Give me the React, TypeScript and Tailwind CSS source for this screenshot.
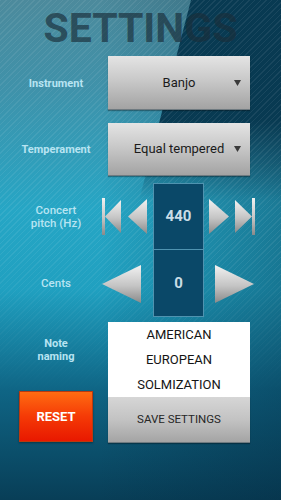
import React from "react";

const Silver: React.FC<{ id: string }> = ({ id }) => (
  <defs>
    <linearGradient id={id} x1="0" y1="0" x2="0" y2="1">
      <stop offset="0%" stopColor="#f2f2f2" />
      <stop offset="55%" stopColor="#c4c4c4" />
      <stop offset="100%" stopColor="#8a8a8a" />
    </linearGradient>
  </defs>
);

const SkipBack = () => (
  <svg width="19" height="37" viewBox="0 0 19 37">
    <Silver id="sb" />
    <rect x="0" y="0" width="3" height="37" fill="url(#sb)" />
    <polygon points="3,18.5 19,2 19,35" fill="url(#sb)" />
  </svg>
);

const Prev = () => (
  <svg width="19" height="37" viewBox="0 0 19 37">
    <Silver id="pv" />
    <polygon points="0,18.5 19,1 19,36" fill="url(#pv)" />
  </svg>
);

const Next = () => (
  <svg width="20" height="37" viewBox="0 0 20 37">
    <Silver id="nx" />
    <polygon points="0,1 20,18.5 0,36" fill="url(#nx)" />
  </svg>
);

const SkipFwd = () => (
  <svg width="20" height="37" viewBox="0 0 20 37">
    <Silver id="sf" />
    <polygon points="0,2 17,18.5 0,35" fill="url(#sf)" />
    <rect x="17" y="0" width="3" height="37" fill="url(#sf)" />
  </svg>
);

const BigTri: React.FC<{ dir: "left" | "right"; id: string }> = ({ dir, id }) => (
  <svg width="39" height="38" viewBox="0 0 39 38">
    <Silver id={id} />
    <polygon
      points={dir === "left" ? "0,19 39,0 39,38" : "0,0 39,19 0,38"}
      fill={`url(#${id})`}
    />
  </svg>
);

const Dropdown: React.FC<{ value: string }> = ({ value }) => (
  <div className="w-[142px] h-full grid grid-cols-[1fr_auto_1fr] items-center bg-[linear-gradient(to_bottom,#e4e4e4,#c9c9c9_45%,#a3a3a3)] border-b border-[#6f7a80] shadow-[0_1px_1px_rgba(0,0,0,0.3)]">
    <span />
    <span className="text-[13px] text-[#1b1b1b] whitespace-nowrap">{value}</span>
    <svg className="justify-self-end mr-[9px]" width="7" height="6" viewBox="0 0 7 6">
      <polygon points="0,0 7,0 3.5,6" fill="#3a3a3a" />
    </svg>
  </div>
);

const Label: React.FC<{ children: React.ReactNode; bold?: boolean }> = ({ children, bold }) => (
  <div
    className={`w-[108px] pl-[4px] text-center leading-[13px] text-[#b8e4f2] ${
      bold ? "font-bold text-[11px]" : "font-medium text-[11.5px]"
    }`}
  >
    {children}
  </div>
);

export default function App() {
  return (
    <div className="relative w-[281px] h-[500px] overflow-hidden font-['Roboto','Liberation_Sans',sans-serif] bg-[linear-gradient(to_bottom,#4c8a9c_0%,#3f92aa_18%,#26a6c5_42%,#20a0c0_58%,#0f6585_78%,#083e57_100%)]">
      {/* right side shade */}
      <div className="absolute inset-0 bg-[linear-gradient(90deg,transparent_35%,rgba(4,40,62,0.35)_100%)]" />
      {/* dark diagonal panel top right */}
      <div className="absolute inset-0 bg-[#083a52] [clip-path:polygon(191px_0,281px_0,281px_320px,108px_320px)] [mask-image:linear-gradient(to_bottom,black_0%,black_24%,transparent_40%)]" />
      {/* stripes */}
      <div className="absolute inset-0 bg-[repeating-linear-gradient(135deg,rgba(255,255,255,0.07)_0px,rgba(255,255,255,0.07)_1px,transparent_1px,transparent_4px)] [mask-image:linear-gradient(to_bottom,black_0%,black_50%,transparent_80%)]" />

      <div className="relative flex flex-col">
        <h1 className="h-[56px] pt-[4px] text-center text-[41px] leading-[48px] font-bold text-[rgba(26,46,58,0.68)]">
          SETTINGS
        </h1>

        <div className="flex items-center h-[54px]">
          <Label bold>Instrument</Label>
          <Dropdown value="Banjo" />
        </div>

        <div className="flex items-center h-[53px] mt-[13px]">
          <Label bold>Temperament</Label>
          <Dropdown value="Equal tempered" />
        </div>

        <div className="flex items-center h-[67px] mt-[7px]">
          <Label>
            Concert
            <br />
            pitch (Hz)
          </Label>
          <div className="ml-[-6px] w-[153px] flex items-center">
            <SkipBack />
            <div className="ml-[7px]">
              <Prev />
            </div>
            <div className="ml-[6px] w-[51px] h-[67px] flex items-center justify-center bg-[#0a4868] border border-[#4f93b0]">
              <span className="text-[15px] font-bold text-[#c9dde6]">440</span>
            </div>
            <div className="ml-[5px]">
              <Next />
            </div>
            <div className="ml-[6px]">
              <SkipFwd />
            </div>
          </div>
        </div>

        <div className="flex items-center h-[67px]">
          <Label>Cents</Label>
          <div className="ml-[-6px] w-[153px] flex items-center">
            <BigTri dir="left" id="cl" />
            <div className="ml-[12px] w-[51px] h-[67px] flex items-center justify-center bg-[#0a4868] border-x border-b border-[#4f93b0]">
              <span className="text-[15px] font-bold text-[#c9dde6]">0</span>
            </div>
            <div className="ml-[11px]">
              <BigTri dir="right" id="cr" />
            </div>
          </div>
        </div>

        <div className="flex mt-[5px]">
          <div className="w-[108px] pl-[4px] flex flex-col items-center">
            <div className="mt-[15px] text-center text-[11px] leading-[13px] font-bold text-[#b8e4f2]">
              Note
              <br />
              naming
            </div>
            <button className="mt-[28px] w-[74px] h-[51px] flex items-center justify-center bg-[linear-gradient(to_bottom,#ff6c12,#f53a06_50%,#e81800)] border border-[#b83a10] shadow-[0_1px_2px_rgba(0,0,0,0.35)] text-white text-[13px] font-bold">
              RESET
            </button>
          </div>
          <div className="w-[142px] flex flex-col">
            <div className="bg-white flex flex-col text-[13px] text-[#141414]">
              <div className="h-[25px] flex items-center justify-center">AMERICAN</div>
              <div className="h-[25px] flex items-center justify-center">EUROPEAN</div>
              <div className="h-[25px] flex items-center justify-center">SOLMIZATION</div>
            </div>
            <button className="h-[46px] flex items-center justify-center bg-[linear-gradient(to_bottom,#d6d6d6,#c3c3c3_50%,#a4a4a4)] border-b border-[#6f7a80] text-[11.5px] text-[#262626] shadow-[0_1px_1px_rgba(0,0,0,0.3)]">
              SAVE SETTINGS
            </button>
          </div>
        </div>
      </div>
    </div>
  );
}
